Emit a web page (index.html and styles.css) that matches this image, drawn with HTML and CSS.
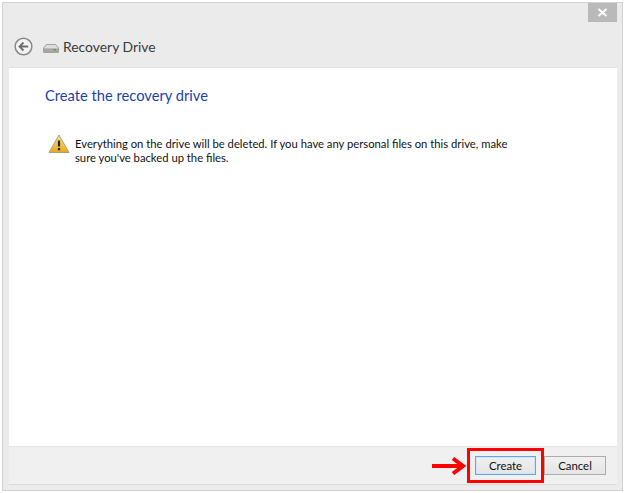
FILE: index.html
```html
<!DOCTYPE html>
<html lang="en">
<head>
<meta charset="utf-8">
<title>Recovery Drive</title>
<link rel="stylesheet" href="styles.css">
</head>
<body>
<div class="window">
  <div class="caption">
    <div class="close"><svg width="11" height="9" viewBox="0 0 11 9"><path d="M1.5 1 L9.5 8 M9.5 1 L1.5 8" stroke="#fff" stroke-width="2" fill="none"/></svg></div>
  </div>
  <div class="nav">
    <svg class="back" width="19" height="19" viewBox="0 0 20 20"><circle cx="10" cy="10" r="8.8" fill="#f4f4f4" stroke="#8a8a8a" stroke-width="1.6"/><path d="M15 10 H6 M10 5.8 L5.8 10 L10 14.2" fill="none" stroke="#6e6e6e" stroke-width="1.9"/></svg>
    <svg class="drive" width="16" height="9" viewBox="0 0 16 9"><path d="M3.5 .5 H12.5 L15.5 4 V8 Q15.5 8.5 15 8.5 H1 Q.5 8.5 .5 8 V4 Z" fill="#dedede" stroke="#8f8f8f" stroke-width=".8"/><rect x="1" y="4.4" width="14" height="3.6" fill="#a6a6a6"/><rect x="10.5" y="5" width="2.4" height="1.6" fill="#3fae3f"/></svg>
    <span class="title">Recovery Drive</span>
  </div>
  <div class="panel">
    <div class="main">
      <h1 class="heading">Create the recovery drive</h1>
      <div class="warning">
        <svg class="warn-icon" width="22" height="20" viewBox="0 0 22 20"><defs><linearGradient id="w" x1="0" y1="0" x2="0" y2="1"><stop offset="0" stop-color="#fbe58a"/><stop offset="1" stop-color="#e5a91e"/></linearGradient></defs><path d="M11 1 L21 18.5 H1 Z" fill="url(#w)" stroke="#b0a070" stroke-linejoin="round"/><path d="M11 6.5 V12.5" stroke="#222" stroke-width="2.2"/><rect x="9.9" y="14" width="2.2" height="2.2" fill="#222"/></svg>
        <p class="message">Everything on the drive will be deleted. If you have any personal files on this drive, make sure you've backed up the files.</p>
      </div>
    </div>
    <div class="footer">
      <svg class="arrow" width="34" height="18" viewBox="0 0 34 18"><path d="M0 9 H30 M21 1.5 L31 9 L21 16.5" fill="none" stroke="#f00" stroke-width="4"/></svg>
      <div class="highlight"><button class="btn btn-default">Create</button></div>
      <button class="btn btn-cancel">Cancel</button>
    </div>
  </div>
</div>
</body>
</html>
```
FILE: styles.css
```css
* { box-sizing: border-box; }
html, body { margin: 0; padding: 0; background: #fff; }
body { width: 625px; height: 493px; padding: 2px; font-family: Lato, "Open Sans", sans-serif; }
.window {
  position: relative;
  width: 621px;
  height: 489px;
  background: #ebebeb;
  border: 1px solid #d2d2d2;
  display: flex;
  flex-direction: column;
}
.caption { height: 28px; display: flex; justify-content: flex-end; padding-right: 5px; flex: none; }
.close {
  width: 29px;
  height: 19px;
  background: #b9b9b9;
  display: flex;
  align-items: center;
  justify-content: center;
}
.nav { height: 31px; margin-bottom: 5px; flex: none; display: flex; align-items: center; padding-left: 11px; }
.back { margin-right: 9px; }
.drive { margin-left: 1px; margin-right: 4px; margin-top: 4px; }
.title { font-size: 13.9px; color: #3a3a3a; }
.panel {
  flex: 1;
  margin: 0 5px 5px 6px;
  background: #fff;
  border-top: 1px solid #e2e2e2;
  display: flex;
  flex-direction: column;
}
.main { flex: 1; padding: 17px 36px 0; }
.heading { margin: 0; font-size: 14.7px; font-weight: 400; color: #1c3fae; line-height: 20px; }
.warning { display: flex; align-items: flex-start; margin-top: 29px; }
.warn-icon { flex: none; margin: 0 5px 0 3px; }
.message { margin: 0; padding-top: 3px; width: 440px; font-size: 11.25px; line-height: 14px; color: #111; }
.footer {
  height: 39px;
  flex: none;
  background: #f0f0f0;
  border-top: 1px solid #e6e6e6;
  border-bottom: 1px solid #dcdcdc;
  display: flex;
  align-items: center;
  justify-content: flex-end;
  padding-right: 11px;
}
.arrow { margin-right: 1px; }
.highlight { border: 3px solid #f00; padding: 5px; display: flex; }
.btn {
  width: 61px;
  height: 19px;
  padding: 0;
  font: 11.4px Lato, "Open Sans", sans-serif;
  color: #111;
  background: linear-gradient(#f0f0f0, #e5e5e5);
  border: 1px solid #acacac;
}
.btn-cancel { width: 62px; }
.btn-default { border: 1px solid #5fa8e0; box-shadow: inset 0 0 0 1px #cfe6f7; }
```
